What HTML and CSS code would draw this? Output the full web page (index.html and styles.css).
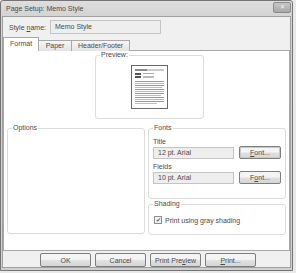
FILE: index.html
```html
<!DOCTYPE html>
<html lang="en">
<head>
    <meta charset="UTF-8">
    <title>Page Setup: Memo Style</title>
    <link rel="stylesheet" href="styles.css">
</head>
<body>
    <div class="window">
        <div class="titlebar">
            <span class="title">Page Setup: Memo Style</span>
            <span class="close">&#x2715;</span>
        </div>

        <div class="dialog">
            <div class="style-row">
                <label class="style-label">Style <u>n</u>ame:</label>
                <div class="field style-field">Memo Style</div>
            </div>

            <div class="tabs">
                <div class="tab active">Format</div>
                <div class="tab">Paper</div>
                <div class="tab">Header/Footer</div>
            </div>

            <div class="panel">
                <fieldset class="group preview">
                    <legend>Preview:</legend>
                    <svg class="page-icon" width="37" height="44" viewBox="0 0 37 44">
                        <rect x="0.5" y="0.5" width="36" height="43" fill="#fff" stroke="#6a6a6a"/>
                        <rect x="4" y="4" width="12" height="2" fill="#8c8c8c"/>
                        <rect x="16" y="4.5" width="17" height="1" fill="#9a9a9a"/>
                        <rect x="4" y="8" width="6" height="2" fill="#555"/>
                        <rect x="12" y="8" width="11" height="1" fill="#aaa"/>
                        <rect x="4" y="11" width="6" height="2" fill="#555"/>
                        <rect x="12" y="11" width="11" height="2" fill="#bbb"/>
                        <rect x="4" y="16" width="29" height="1" fill="#999"/>
                        <rect x="4" y="18" width="29" height="1" fill="#bbb"/>
                        <rect x="4" y="20" width="29" height="1" fill="#999"/>
                        <rect x="4" y="22" width="27" height="1" fill="#bbb"/>
                        <rect x="4" y="24" width="29" height="1" fill="#999"/>
                        <rect x="4" y="26" width="29" height="1" fill="#bbb"/>
                        <rect x="4" y="28" width="29" height="1" fill="#999"/>
                        <rect x="4" y="30" width="26" height="1" fill="#bbb"/>
                        <rect x="4" y="32" width="29" height="1" fill="#999"/>
                        <rect x="4" y="34" width="29" height="1" fill="#bbb"/>
                        <rect x="4" y="36" width="29" height="1" fill="#999"/>
                        <rect x="4" y="38" width="22" height="1" fill="#bbb"/>
                    </svg>
                </fieldset>

                <div class="lower">
                    <fieldset class="group options">
                        <legend>Options</legend>
                    </fieldset>

                    <div class="right-col">
                        <fieldset class="group fonts">
                            <legend>Fonts</legend>
                            <div class="font-label">Title</div>
                            <div class="font-row">
                                <div class="field font-field">12 pt. Arial</div>
                                <button class="btn font-btn focus"><u>F</u>ont...</button>
                            </div>
                            <div class="font-label">Fields</div>
                            <div class="font-row">
                                <div class="field font-field">10 pt. Arial</div>
                                <button class="btn font-btn">F<u>o</u>nt...</button>
                            </div>
                        </fieldset>

                        <fieldset class="group shading">
                            <legend>Shading</legend>
                            <div class="check-row">
                                <span class="checkbox">&#x2714;</span>
                                <span>Print using gray shading</span>
                            </div>
                        </fieldset>
                    </div>
                </div>
            </div>

            <div class="buttons">
                <button class="btn">OK</button>
                <button class="btn">Cancel</button>
                <button class="btn">Print Pre<u>v</u>iew</button>
                <button class="btn"><u>P</u>rint...</button>
            </div>
        </div>
    </div>
</body>
</html>
```

FILE: styles.css
```css
body {
    margin: 0;
    background-color: #e9e9e9;
    font-family: "Liberation Sans", Arial, sans-serif;
    font-size: 7px;
    color: #4a4a4a;
}

.window {
    width: 291px;
    height: 269px;
    border: 1px solid #747474;
    border-radius: 3px 3px 0 0;
    background: linear-gradient(#dedede, #d4d4d4 14px, #d0d0d0);
    display: flex;
    flex-direction: column;
}

.titlebar {
    height: 15px;
    display: flex;
    align-items: center;
    justify-content: space-between;
    padding: 0 1px 0 5px;
    color: #4a4a4a;
}

.close {
    width: 16px;
    height: 9px;
    margin-top: -2px;
    border: 1px solid #8a8a8a;
    border-radius: 2px;
    background: linear-gradient(#c6c6c6, #a8a8a8);
    color: #f4f4f4;
    font-size: 6px;
    line-height: 9px;
    text-align: center;
}

.dialog {
    flex: 1;
    margin: 0 1px 2px 1px;
    border: 1px solid #a0a0a0;
    background-color: #f0f0f0;
    display: flex;
    flex-direction: column;
}

.style-row {
    display: flex;
    align-items: center;
    height: 14px;
    margin-top: 3px;
}

.style-label {
    width: 41px;
    padding-left: 6px;
}

.field {
    height: 12px;
    line-height: 12px;
    border: 1px solid #c4c4c4;
    background-color: #eeeeee;
    padding-left: 4px;
    box-sizing: content-box;
}

.style-field {
    width: 105px;
}

.tabs {
    display: flex;
    align-items: flex-end;
    height: 13px;
    margin-top: 4px;
    position: relative;
    z-index: 1;
}

.tab {
    height: 10px;
    line-height: 10px;
    padding: 0 6px;
    border: 1px solid #a8a8a8;
    border-bottom: none;
    background: linear-gradient(#f6f6f6, #e4e4e4);
    margin-left: -1px;
}

.tab:nth-child(2) {
    width: 20px;
    text-align: center;
}

.tab.active {
    height: 13px;
    line-height: 12px;
    width: 22px;
    background: #fff;
    margin-left: 0;
}

.panel {
    height: 199px;
    margin-top: -1px;
    border: 1px solid #a8a8a8;
    background-color: #fff;
    display: flex;
    flex-direction: column;
}

.group {
    margin: 0;
    padding: 0 4px;
    border: 1px solid #dcdcdc;
    border-radius: 3px;
    min-width: 0;
}

.group legend {
    padding: 0 1px;
    line-height: 8px;
}

.preview {
    width: 99px;
    height: 66px;
    margin: 0 0 0 91px;
    display: flex;
    justify-content: center;
}

.page-icon {
    margin-top: 6px;
    display: block;
}

.lower {
    display: flex;
    margin-top: 5px;
    padding: 0 3px;
    gap: 3px;
}

.options {
    width: 128px;
    height: 108px;
}

.right-col {
    flex: 1;
    display: flex;
    flex-direction: column;
    gap: 1px;
}

.fonts {
    height: 73px;
    padding: 0 4px;
}

.font-label {
    margin-top: 6px;
    line-height: 8px;
}

.font-label + .font-row + .font-label {
    margin-top: 4px;
}

.font-row {
    display: flex;
    align-items: center;
    gap: 5px;
}

.font-field {
    width: 75px;
    height: 10px;
    line-height: 10px;
}

.btn {
    font-family: inherit;
    font-size: 7px;
    color: #4a4a4a;
    border: 1px solid #7e7e7e;
    border-radius: 2px;
    background: linear-gradient(#f4f4f4 45%, #e0e0e0 55%, #d6d6d6);
    padding: 0;
    margin: 0;
}

.font-btn {
    width: 42px;
    height: 13px;
}

.font-btn.focus {
    box-shadow: inset 0 0 0 1px #c8c8c8;
}

.shading {
    height: 33px;
}

.check-row {
    display: flex;
    align-items: center;
    gap: 3px;
    margin-top: 8px;
    margin-left: 1px;
}

.checkbox {
    width: 6px;
    height: 6px;
    border: 1px solid #8e8e8e;
    background-color: #f2f2f2;
    font-size: 6px;
    line-height: 6px;
    text-align: center;
    color: #555;
}

.buttons {
    display: flex;
    gap: 4px;
    margin-top: 2px;
    padding-left: 37px;
}

.buttons .btn {
    width: 51px;
    height: 14px;
}
```
